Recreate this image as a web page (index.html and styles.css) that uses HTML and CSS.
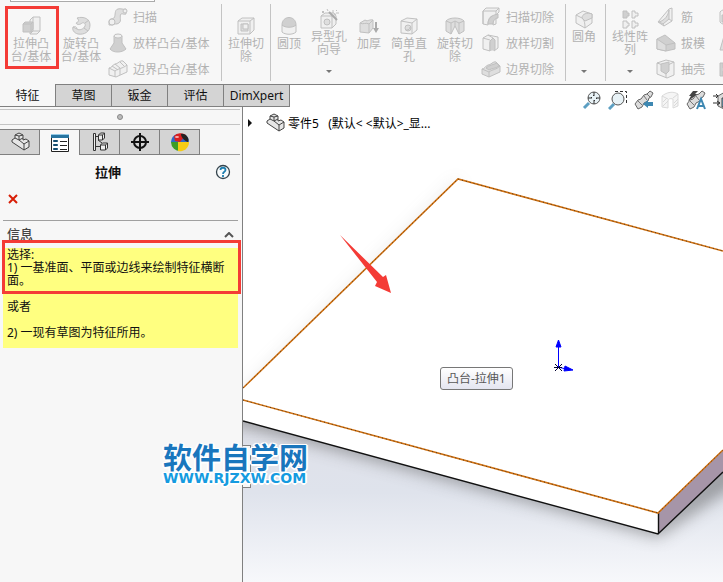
FILE: index.html
```html
<!DOCTYPE html>
<html lang="zh-CN">
<head>
  <meta charset="UTF-8" />
  <meta name="viewport" content="width=device-width, initial-scale=1.0"/>
  <title>拉伸</title>
  <link rel="stylesheet" href="styles.css">
</head>
<body>
  <header class="ribbon">
    <div class="menu-edge"></div>
    <div class="group">
      <button class="tool marked">
        <svg class="icon" viewBox="0 0 20 20"><path class="light" d="M9 4l3-3h7v14l-3 3H9z"/><path d="M12 1v14l-3 3M12 15h7"/><path class="dark" d="M2 8l2-2h8v7l-2 3H2z"/><path d="M2 8h8v8M10 8l2-2"/></svg>
        <span>拉伸凸<br>台/基体</span>
      </button>
      <button class="tool">
        <svg class="icon" viewBox="0 0 20 20"><path class="mid" d="M6 2c7-2 13 1 13 7 0 7-6 10-12 9-4-1-6-4-5-7l4 2c2 2 7 0 8-3 1-2-1-4-3-3-2 2-5 2-6 0 2-1 4-2 1-5z"/><path d="M14 7l4-3M13 12l4 3M2 11c2-1 4 0 4 2"/></svg>
        <span>旋转凸<br>台/基体</span>
      </button>
      <div class="stack wide">
        <button class="row">
          <svg class="icon" viewBox="0 0 20 20"><path class="mid" d="M1 14c1-3 4-2 5-3 2-3 0-8 4-9 3-1 5 1 8 0v5c-2 1-4-1-5 0-2 2 1 7-2 9-3 2-4 0-6 2H1z"/><circle class="light" cx="4" cy="15" r="3"/><circle class="light" cx="17" cy="4" r="2"/></svg>
          <span>扫描</span>
        </button>
        <button class="row">
          <svg class="icon" viewBox="0 0 20 20"><path class="dark" d="M6 3v7l-4 6c3 4 12 4 16 0l-4-6V3z"/><ellipse class="light" cx="10" cy="3" rx="4" ry="2"/></svg>
          <span>放样凸台/基体</span>
        </button>
        <button class="row">
          <svg class="icon" viewBox="0 0 20 20"><path class="light" d="M1 9c3 0 3-3 6-4 3 0 5-4 8-3l4 4v7L8 18l-7-2z"/><path d="M1 9l6 3c4-3 7-2 12-6M7 12v6M7 5l5 4v7M4 7l6 4M12 3l4 4"/></svg>
          <span>边界凸台/基体</span>
        </button>
      </div>
    </div>
    <div class="group">
      <button class="tool medium">
        <svg class="icon" viewBox="0 0 20 20"><path class="light" d="M2 5l4-3h12v12l-4 4H2z"/><path d="M2 5h12v13M14 5l4-3"/><path class="mid" d="M5 8h7v7H5z"/><path class="light" d="M7 8h5v5H7z"/></svg>
        <span>拉伸切<br>除</span>
      </button>
    </div>
    <div class="group">
      <button class="tool narrow">
        <svg class="icon" viewBox="0 0 20 20"><path class="light" d="M3 9v7c3 3 11 3 14 0V9z"/><path class="dark" d="M3 9c0-10 14-10 14 0-3 3-11 3-14 0z"/></svg>
        <span>圆顶</span>
      </button>
      <button class="tool small drop">
        <svg class="icon" viewBox="0 0 20 20"><path class="light" d="M2 7l4-3h9l2 3v8l-4 4H2z"/><path d="M2 7h11v12M13 7l4-2"/><circle class="mid" cx="8" cy="13" r="3"/><path class="thick" d="M10 3l8 8"/><path d="M3 2l2 2M5 2L3 4M14 1v3M17 4h3M8 0l1 2M18 1l-1 1"/></svg>
        <span>异型孔<br>向导</span>
        <i class="caret"></i>
      </button>
      <button class="tool narrow">
        <svg class="icon" viewBox="0 0 20 20"><path class="mid" d="M1 7l5-3c3 2 4-1 8 0v8l-4 5-9-1z"/><path d="M1 7c3 2 6-1 9 1v9M10 8l4-4"/><path class="thick" d="M17 6v8"/><path class="solid" d="M14 12h6l-3 5z"/></svg>
        <span>加厚</span>
      </button>
      <button class="tool small">
        <svg class="icon" viewBox="0 0 20 20"><path class="light" d="M2 5l6-3 10 1v11l-5 4-11-1z"/><path d="M2 5l11 2v11M13 7l5-4"/><circle class="mid" cx="9" cy="12" r="3"/><path d="M7 14c3 0 4-1 4-3"/></svg>
        <span>简单直<br>孔</span>
      </button>
      <button class="tool medium">
        <svg class="icon" viewBox="0 0 20 20"><path class="mid" d="M1 5c3-4 15-4 18 0v10l-5 3-4-8-4 8-5-3z"/><path d="M1 5l5 2v11M19 5l-5 2v11M6 7l4-2 4 2M10 5v5"/></svg>
        <span>旋转切<br>除</span>
      </button>
      <div class="stack">
        <button class="row">
          <svg class="icon" viewBox="0 0 20 20"><path class="light" d="M2 4l3-3h13v4l-3 3v9l-3 1V9c-3 0-5 3-5 9l-5-1z"/><path d="M2 4h13l3-3M2 4v13M15 4v4"/><path class="dark" d="M7 17c0-6 4-9 10-10v4c-3 0-5 3-5 6z"/></svg>
          <span>扫描切除</span>
        </button>
        <button class="row">
          <svg class="icon" viewBox="0 0 20 20"><path class="light" d="M2 5l5-3 10 2v11l-4 3V9c-2-2-4-1-4 1v8l-7-2z"/><path class="dark" d="M9 18V8l3-3 2 2v10"/><path d="M2 5l7 2M7 2l5 3"/></svg>
          <span>放样切割</span>
        </button>
        <button class="row">
          <svg class="icon" viewBox="0 0 20 20"><path class="mid" d="M1 10c3 0 3-3 6-4 3 0 5-4 8-3l4 4v6L8 18l-7-3z"/><path d="M1 10l7 3c4-3 7-2 11-6M8 13v5"/><path class="dark" d="M5 9c3-3 7-3 11-5l2 3c-4 3-7 2-10 4z"/></svg>
          <span>边界切除</span>
        </button>
      </div>
    </div>
    <div class="group">
      <button class="tool narrow drop fillet">
        <svg class="icon" viewBox="0 0 20 20"><path class="light" d="M2 6l7-4 9 3v9l-7 5-9-5z"/><path class="mid" d="M8 9c0-4 5-6 10-4v4l-7 3z"/><path d="M2 6l6 3c2 2 3 4 3 10"/></svg>
        <span>圆角</span>
        <i class="caret"></i>
      </button>
    </div>
    <div class="group">
      <button class="tool medium drop">
        <svg class="icon" viewBox="0 0 20 20"><path class="dark" d="M3 2h4v2h2v3H7v2H3z"/><path class="light" d="M12 2h3v2h3v3h-3v2h-3zM3 12h4v2h2v3H7v2H3zM12 12h3v2h3v3h-3v2h-3z"/></svg>
        <span>线性阵<br>列</span>
        <i class="caret"></i>
      </button>
      <div class="stack">
        <button class="row">
          <svg class="icon" viewBox="0 0 20 20"><path class="light" d="M13 2l3-1v13l-8 5-6-4z"/><path class="mid" d="M3 15c6-2 9-6 10-12v9l-6 5z"/><path d="M13 12l3 2M7 17l1 2"/></svg>
          <span>筋</span>
        </button>
        <button class="row">
          <svg class="icon" viewBox="0 0 20 20"><path class="dark" d="M1 6l8-4 10 8v6l-9 2-9-2z"/><path class="mid" d="M1 6l9 6v6l-9-2z"/><path d="M10 12l9-2"/></svg>
          <span>拔模</span>
        </button>
        <button class="row">
          <svg class="icon" viewBox="0 0 20 20"><path class="light" d="M1 4l9-3 8 2v13l-7 3-10-4z"/><path d="M1 4l9 3v12M10 7l8-4"/><path class="dark" d="M5 5l8-2v9l-3 3-5-3z"/></svg>
          <span>抽壳</span>
        </button>
      </div>
      <div class="stack">
        <button class="row" aria-label="包覆"><svg class="icon" viewBox="0 0 20 20"><path class="light" d="M2 5c3-4 13-4 16 0v10c-3 4-13 4-16 0z"/><path class="dark" d="M4 8h8v7H4z"/></svg></button>
        <button class="row" aria-label="相交"><svg class="icon" viewBox="0 0 20 20"><path class="mid" d="M2 17L6 3l9 5v9z"/></svg></button>
        <button class="row" aria-label="镜向"><svg class="icon" viewBox="0 0 20 20"><path class="dark" d="M2 4h3v5h4v3H5v5H2z"/></svg></button>
      </div>
    </div>
  </header>

  <main class="workspace">
    <aside class="side">
      <nav class="tabs">
        <button class="tab active">特征</button>
        <button class="tab">草图</button>
        <button class="tab">钣金</button>
        <button class="tab">评估</button>
        <button class="tab long">DimXpert</button>
      </nav>
      <div class="panel">
        <div class="grip"><i></i></div>
        <div class="panel-tabs">
          <button class="ptab" aria-label="特征管理">
            <svg class="icon part" viewBox="0 0 20 20"><path d="M2 8l3-2V3l4-2 4 2v5l3-1 3 2v6l-5 3L2 10z"/><path d="M5 6l4 2V4l4-1M9 4L5 3M9 8l5 4v6M14 12l5-3M9 8l4-2"/></svg>
          </button>
          <button class="ptab active" aria-label="属性">
            <svg class="icon" viewBox="0 0 20 20"><path fill="#fff" stroke="#222" d="M1.500 2.500h17v16h-17z"/><path fill="#2674a0" d="M1 1h18v4H1z"/><path fill="#93c9e6" d="M1 1h18v1H1z"/><path fill="#5ba6cd" stroke="#174e70" d="M3.500 7.500h4v1h-4zM3.500 11.500h4v1h-4zM3.500 15.500h4v1h-4z"/><path stroke="#222" d="M10 8.500h7M10 12.500h7M10 16.500h7"/></svg>
          </button>
          <button class="ptab" aria-label="配置">
            <svg class="icon config" viewBox="0 0 20 20"><path d="M3.500 1.500h2v17h-2zM5.500 4.500h4M5.500 14.500h5"/><path d="M8.500 3l2-2h4v5l-2 2h-4zM8.500 3h4v5M12.500 3l2-2M10.500 13l2-2h5v5l-2 2h-5zM10.500 13h5v5M15.500 13l2-2M8 8l4 3"/></svg>
          </button>
          <button class="ptab" aria-label="尺寸">
            <svg class="icon" viewBox="0 0 20 20" fill="none" stroke="#111" stroke-width="2"><circle cx="10" cy="10" r="6"/><path d="M1 10h18M10 1v18"/></svg>
          </button>
          <button class="ptab" aria-label="外观">
            <svg class="icon" viewBox="0 0 20 20"><path fill="#3d9d25" d="M1 10h9l1 9a9 9 0 0 1-10-9z"/><path fill="#f5cc15" d="M8 10h11a9 9 0 0 1-11 9z"/><path fill="#2f68c8" d="M1 10a9 9 0 0 1 6-8h7a9 9 0 0 1 5 8z"/><path fill="#d91f20" d="M4 4a9 9 0 0 1 12-1l-6 7-5-1z"/><path fill="#222" d="M11 2c4-1 9 4 7 8-2 0-7-4-7-8z"/><ellipse cx="7" cy="5" rx="2" ry="1" fill="#f6b2b2"/></svg>
          </button>
        </div>
        <div class="title-bar">
          <h1>拉伸</h1>
          <button class="help" aria-label="帮助">
            <svg viewBox="0 0 16 16"><circle cx="8" cy="8" r="6.500" fill="#f8fbfc" stroke="#34434c" stroke-width="1.300"/><path d="M5.500 6c0-3 5-3 5 0 0 2-2.500 1.500-2.500 4M8 11v2" fill="none" stroke="#1f7fb0" stroke-width="1.800"/></svg>
          </button>
        </div>
        <button class="close" aria-label="取消">
          <svg viewBox="0 0 10 10"><path d="M1 1l8 8M9 1L1 9" stroke="#d81e06" stroke-width="2"/></svg>
        </button>
        <section class="info">
          <h2>信息 <svg viewBox="0 0 10 6"><path d="M1 5l4-4 4 4" fill="none" stroke="#555" stroke-width="2"/></svg></h2>
          <div class="message">
            <p class="outlined">选择:<br>1) 一基准面、平面或边线来绘制特征横断面。</p>
            <p>或者</p>
            <p>2) 一现有草图为特征所用。</p>
          </div>
        </section>
      </div>
    </aside>

    <section class="viewport">
      <svg class="model" viewBox="243 85 480 497" preserveAspectRatio="xMinYMin slice">
        <defs>
          <linearGradient id="floor" x1="0" y1="0" x2="0" y2="1">
            <stop offset="0" stop-color="#fff"/>
            <stop offset="0.500" stop-color="#fafafc"/>
            <stop offset="0.700" stop-color="#dfe1e9"/>
            <stop offset="0.820" stop-color="#dfe3ec"/>
            <stop offset="1" stop-color="#f7f8fb"/>
          </linearGradient>
          <filter id="soft" x="-20%" y="-20%" width="140%" height="140%"><feGaussianBlur stdDeviation="8"/></filter>
        </defs>
        <path fill="url(#floor)" d="M243 85h480v497H243z"/>
        <path fill="#fff" d="M243 85h480v166L458 179 243 388z"/>
        <path fill="#888" opacity="0.140" filter="url(#soft)" d="M458 177L200 430h300z"/>
        <path fill="#555" opacity="0.500" filter="url(#soft)" d="M200 395L658 520 780 410v46L658 537 200 414z"/>
        <path fill="#fff" d="M458 179l265 72v199l-65 63v21L243 421v-33z"/>
        <path fill="#a695a8" d="M658 513l65-63v23l-65 61z"/>
        <path fill="none" stroke="#111" stroke-width="1.400" d="M243 421l415 113 65-62M658.500 513v21"/>
        <path fill="none" stroke="#d07010" stroke-width="1.600" d="M243 388l215-209 265 72M243 400l415 113 65-63"/>
        <path fill="none" stroke="#553b1c" stroke-width="1" stroke-dasharray="1 3" d="M243 388l215-209 265 72M243 400l415 113 65-63"/>
        <path fill="#00f" stroke="#00f" d="M558.500 367v-20M558 367l8 2M556 347h5l-2.500-7zM565 366l-1 5 9-1z"/>
        <path stroke="#003" d="M555 364l7 7M562 364l-7 7M554 367.500h8"/>
        <path fill="#f43b36" d="M340 235l43 42 3-2 5 18-16-7 2-4z"/>
      </svg>
      <div class="view-tools">
        <button aria-label="整屏显示全图"><svg class="icon color" viewBox="0 0 20 20"><path class="blue" d="M2 18l5-5"/><circle cx="12" cy="8" r="6"/><path class="mark" d="M12 2v4l-1-1M12 14v-4l1 1M6 8h4L9 7M18 8h-4l1 1"/></svg></button>
        <button aria-label="局部放大"><svg class="icon color" viewBox="0 0 20 20"><path class="mark" stroke-dasharray="3 2" d="M7 1.500h11.500v13"/><path class="blue" d="M1 19l5-5"/><circle cx="10" cy="9" r="6"/></svg></button>
        <button aria-label="上一视图"><svg class="icon color" viewBox="0 0 20 20"><path class="metal" d="M1 14l3-4 3-1 3-4 3-1 3-3 3 2-2 4-2 1-1 3-4 2-2 4-4 2z"/><path class="shade" d="M4 11l4 4M10 6l3 4M13 4l3 3"/><path class="arrow" d="M9 14l5-4v2h5v4h-5v2z"/></svg></button>
        <button aria-label="剖面视图"><svg class="icon" viewBox="0 0 20 20"><g opacity="0.600"><path class="light" d="M2 6c5-4 11-5 16-2v12l-5 2V9c-3-1-5 0-5 2v7l-6-1z"/><path d="M2 6l6 3M13 8l5-4M3 12l4-4M3 16l5-5M14 13l4-4M14 16l4-4"/></g></svg></button>
        <button aria-label="动态注解"><svg class="icon color" viewBox="0 0 20 20"><path class="bolt" d="M3 6l4-5h5L9 4h3L2 11l3-5z"/><path class="metal" d="M1 14l3-4 3-1 3-4 3-1 3-3 3 2-2 4-2 1-1 3-4 2-2 4-4 2z"/><path class="shade" d="M4 11l4 4M10 6l3 4"/><path class="letter" d="M11 19l4-10 4 10M12 16h6"/></svg></button>
        <button aria-label="视图定向"><svg class="icon color" viewBox="0 0 20 20"><path class="metal" d="M6 6l7-4 6 3v11l-7 3-6-3z"/><path class="cube" d="M10 8h9v9h-9z"/><path class="mark" d="M1 6h5M4 4l2 2-2 2M1 13h7M5 11l3 2-3 2M12 0v5"/></svg></button>
      </div>
      <div class="tree">
        <i class="expander"></i>
        <svg class="icon part" viewBox="0 0 20 20"><path d="M2 8l3-2V3l4-2 4 2v5l3-1 3 2v6l-5 3L2 10z"/><path d="M5 6l4 2V4l4-1M9 4L5 3M9 8l5 4v6M14 12l5-3M9 8l4-2"/></svg>
        <span>零件5&nbsp;&nbsp; (默认&lt; &lt;默认&gt;_显...</span>
      </div>
      <div class="handle"></div>
      <div class="tooltip" role="tooltip">凸台-拉伸1</div>
    </section>

    <div class="watermark">
      <strong>软件自学网</strong>
      <span>WWW.RJZXW.COM</span>
    </div>
  </main>
</body>
</html>
```
FILE: styles.css
```css
*, *::before, *::after { box-sizing: border-box; }
body {
  margin: 0;
  min-height: 100vh;
  display: flex;
  flex-direction: column;
  overflow: hidden;
  font-family: "Noto Sans", "Noto Sans CJK SC", sans-serif;
  font-size: 12px;
  line-height: 13px;
  color: #111;
  background: #f7f7f7;
}
button {
  padding: 0;
  border: none;
  background: none;
  font: inherit;
  color: inherit;
}
h1, h2, p { margin: 0; }
svg { display: block; flex: none; }
.icon { width: 20px; height: 20px; }

/* ribbon */
.ribbon {
  position: relative;
  display: flex;
  height: 85px;
  padding-left: 6px;
  border-bottom: 1px solid #808080;
  color: #b2b2b2;
  overflow: hidden;
}
.menu-edge {
  position: absolute;
  top: 0;
  left: 10px;
  width: 145px;
  height: 2px;
  border: 1px solid #aaa;
  border-top: none;
  background: #fff;
}
.group {
  position: relative;
  display: flex;
  flex: none;
}
.group + .group { padding-left: 1px; }
.group + .group::before {
  content: "";
  position: absolute;
  left: 0;
  top: 4px;
  bottom: 3px;
  width: 1px;
  background: #c4c4c4;
}
.tool {
  position: relative;
  display: flex;
  flex-direction: column;
  align-items: center;
  width: 50px;
  padding-top: 16px;
  white-space: nowrap;
}
.tool span { margin-top: 1px; }
.tool.narrow { width: 36px; }
.tool.small { width: 44px; }
.tool.medium { width: 48px; }
.tool.drop { padding: 9px 0 11px; }
.tool.fillet { margin-right: 3px; }
.caret {
  margin-top: auto;
  border: 3px solid transparent;
  border-top-color: #777;
  border-bottom: none;
}
.marked::after {
  content: "";
  position: absolute;
  top: 6px;
  left: -1px;
  right: -3px;
  height: 63px;
  border: 3px solid #f43b36;
}
.stack {
  width: 86px;
  padding: 4px 0 0 2px;
}
.stack.wide { width: 115px; }
.group:last-child .stack { width: 62px; }
.row {
  display: flex;
  align-items: center;
  gap: 5px;
  height: 26px;
  white-space: nowrap;
}
.ribbon .icon path, .ribbon .icon circle, .ribbon .icon ellipse,
.view-tools .icon path { fill: none; stroke: #c0c0c0; }
.ribbon .icon .light, .view-tools .icon .light { fill: #f0f0f0; }
.ribbon .icon .mid { fill: #dedede; }
.ribbon .icon .dark { fill: #d0d0d0; }
.ribbon .icon .solid { fill: #aaa; stroke: none; }
.ribbon .icon .thick { stroke: #aaa; stroke-width: 2; }

/* command tabs */
.workspace {
  position: relative;
  display: flex;
  flex: 1;
}
.side {
  display: flex;
  flex-direction: column;
  flex: none;
  width: 243px;
}
.tabs {
  position: relative;
  z-index: 1;
  display: flex;
  width: max-content;
  height: 22px;
}
.tab {
  width: 56px;
  border: 1px solid #808080;
  border-width: 0 1px 1px 0;
  background: #d4d4d4;
}
.tab.long { width: 66px; }
.tab.active {
  margin-top: -1px;
  background: #f7f7f7;
}

/* property panel */
.panel {
  flex: 1;
  border-right: 1px solid #808080;
}
.grip {
  display: flex;
  justify-content: center;
  align-items: center;
  height: 16px;
  margin: 2px 2px 4px 0;
  border: 1px solid #c4c4c4;
  border-width: 1px 0;
}
.grip i {
  width: 6px;
  height: 6px;
  border: 1px solid #888;
  border-radius: 50%;
  background: #bbb;
}
.panel-tabs {
  display: flex;
  height: 26px;
  margin-right: 2px;
  box-shadow: inset 0 -1px #a0a0a0;
}
.ptab {
  display: flex;
  justify-content: center;
  align-items: center;
  width: 40px;
  border: 1px solid #808080;
  border-left: none;
  background: #d4d4d4;
}
.ptab.active {
  border-bottom: none;
  background: #f7f7f7;
}
.part path {
  fill: #e6e6e6;
  stroke: #444;
}
.part path + path { fill: none; }
.config path {
  fill: #eee;
  stroke: #333;
}
.title-bar {
  display: flex;
  align-items: center;
  height: 34px;
  padding-right: 11px;
}
h1 {
  flex: 1;
  padding-left: 1px;
  font-size: 13px;
  text-align: center;
}
.help svg {
  width: 16px;
  height: 16px;
}
.close {
  display: block;
  margin: 5px 0 16px 8px;
}
.close svg {
  width: 10px;
  height: 10px;
}
.info {
  margin: 0 4px 0 3px;
  border-top: 1px solid #a0a0a0;
}
.info h2 {
  display: flex;
  justify-content: space-between;
  align-items: center;
  height: 27px;
  padding: 0 4px;
  font-size: 13px;
  font-weight: 500;
  color: #444;
}
.info h2 svg {
  width: 10px;
  height: 6px;
}
.message {
  display: grid;
  gap: 13px;
  padding: 0 4px 9px;
  background: #ffff80;
}
.outlined { position: relative; }
.outlined::after {
  content: "";
  position: absolute;
  top: -8px;
  bottom: -7px;
  left: -5px;
  right: -7px;
  border: 3px solid #f43b36;
}

/* graphics area */
.viewport {
  position: relative;
  flex: 1;
  min-width: 0;
  overflow: hidden;
  background: #fff;
}
.model {
  position: absolute;
  width: 100%;
  height: 100%;
}
.view-tools {
  position: relative;
  display: flex;
  justify-content: flex-end;
  gap: 6px;
  margin: 5px -9px 3px 0;
}
.view-tools .color circle {
  fill: #e8f2f6;
  stroke: #555;
}
.view-tools .color .blue {
  stroke: #5c9fc2;
  stroke-width: 3;
}
.view-tools .color .mark { stroke: #333; }
.view-tools .color .metal { fill: #dcdcdc; stroke: #666; }
.view-tools .color .shade { stroke: #777; }
.view-tools .color .arrow { fill: #3e88b2; stroke: none; }
.view-tools .color .bolt { fill: #444; stroke: none; }
.view-tools .color .letter { stroke: #3e88b2; stroke-width: 2; }
.view-tools .color .cube { fill: #69b3d7; stroke: #444; }
.tree {
  position: relative;
  display: flex;
  align-items: center;
  padding-left: 5px;
  color: #000;
}
.expander {
  margin-right: 13px;
  border: 4px solid transparent;
  border-left-color: #111;
  border-right: none;
}
.tree span { margin-left: 3px; }
.tooltip {
  position: absolute;
  top: 282px;
  left: 197px;
  padding: 4px 6px;
  border: 1px solid #777;
  border-radius: 3px;
  background: linear-gradient(#fff, #e4e5f0);
  color: #575757;
}
.handle {
  position: absolute;
  top: 360px;
  left: 0;
  width: 8px;
  height: 43px;
  border: 1px solid #808080;
  border-left: none;
  background: #f7f7f7;
}
.watermark {
  position: absolute;
  top: 358px;
  left: 163px;
  color: #1976bd;
  text-shadow: 1px 1px #fff, -1px -1px #fff, 1px -1px #fff, -1px 1px #fff, 2px 0 #fff, -2px 0 #fff, 0 2px #fff;
}
.watermark strong, .watermark span { display: block; }
.watermark strong {
  font-size: 29px;
  line-height: 29px;
}
.watermark span {
  font: bold 14px/12px "DejaVu Sans", sans-serif;
  color: #159be0;
}
```
